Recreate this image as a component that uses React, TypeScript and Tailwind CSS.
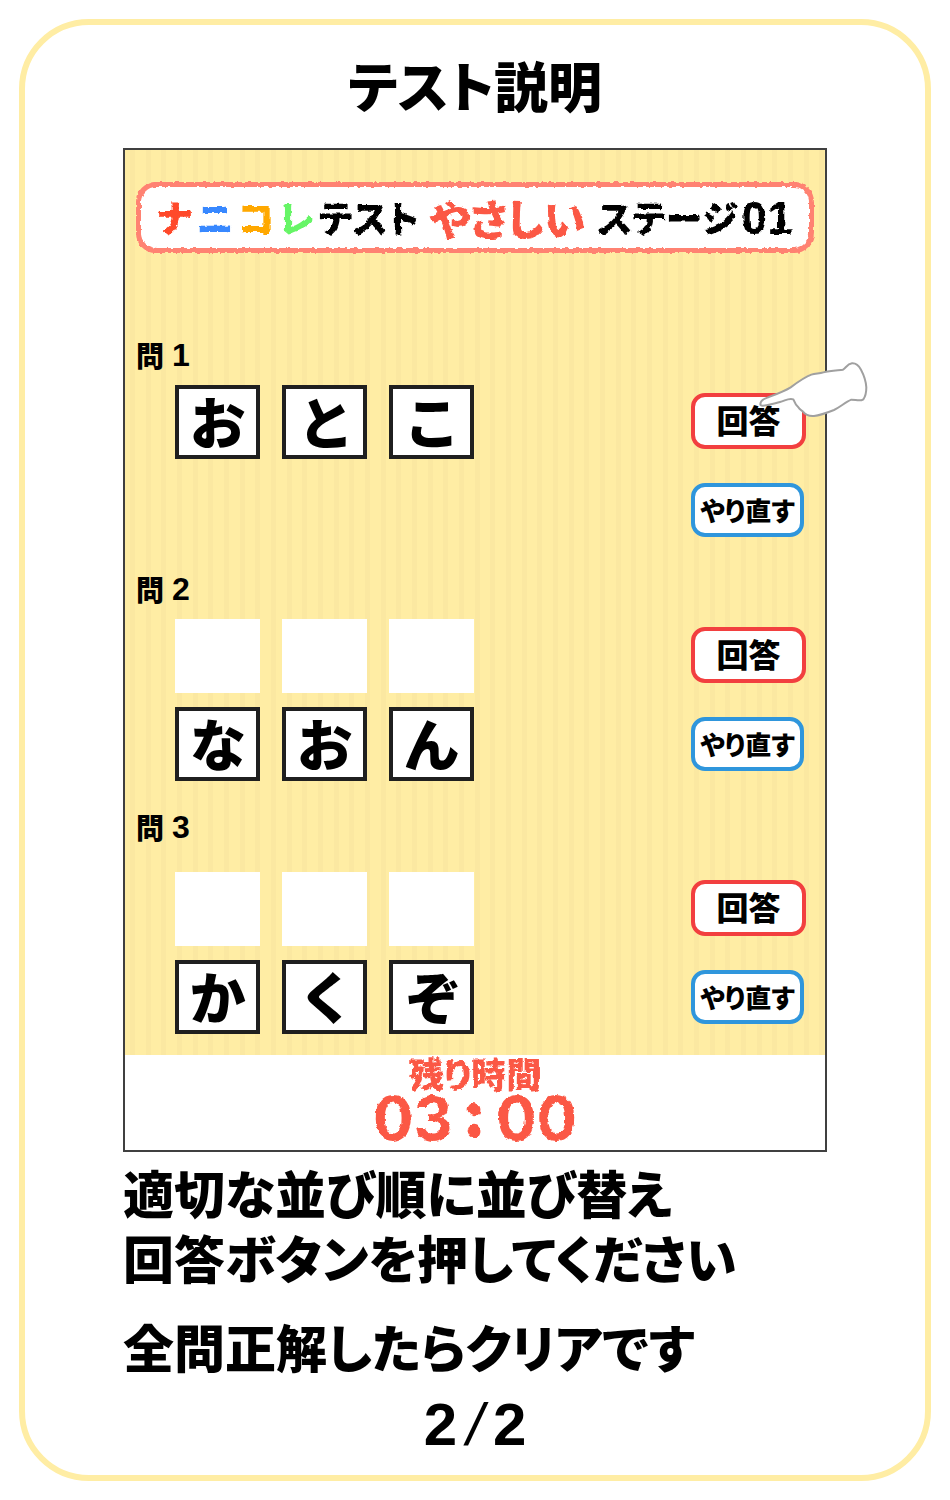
import React from "react";

const ink = "font-['Noto_Sans_CJK_JP',sans-serif] font-black [font-feature-settings:'palt']";

function RoughFilters() {
  return (
    <svg width="0" height="0" className="absolute" aria-hidden="true">
      <filter id="rough" x="-2%" y="-10%" width="104%" height="120%">
        <feTurbulence type="fractalNoise" baseFrequency="0.18" numOctaves="3" seed="4" result="n" />
        <feDisplacementMap in="SourceGraphic" in2="n" scale="4" xChannelSelector="R" yChannelSelector="G" />
      </filter>
    </svg>
  );
}

function Hand() {
  return (
    <svg
      viewBox="0 0 375 216"
      className="pointer-events-none absolute -top-10 left-[59px] h-[72px] w-[125px]"
      aria-hidden="true"
    >
      <path
        d="M31 154 C31 145 40 138 52 134 C78 124 105 114 122 103 C145 86 165 72 184 65 C197 61 208 62 220 58 C240 52 262 52 279 50 C288 44 292 33 306 31 C320 30 327 39 333 50 C342 67 348 86 349 103 C349 118 346 131 340 139 C330 146 318 140 304 140 C285 148 270 163 252 171 C232 179 212 187 192 189 C178 190 165 184 159 176 C155 170 150 172 145 163 C136 155 134 149 130 139 C115 134 105 144 90 147 C70 152 52 158 38 158 C33 158 31 157 31 154 Z"
        fill="#fff"
        stroke="#a0a0a0"
        strokeWidth="6"
        strokeLinejoin="round"
      />
    </svg>
  );
}

function Tile({ char }: { char: string }) {
  return (
    <button
      type="button"
      className="flex h-[74px] w-[85px] items-center justify-center border-4 border-[#1f1f1f] bg-white pb-1 text-[56px] leading-none"
    >
      {char}
    </button>
  );
}

type QuestionProps = { n: number; slots: boolean; tiles: string[]; hand?: boolean; roomy?: boolean };

function Question({ n, slots, tiles, hand, roomy }: QuestionProps) {
  return (
    <section>
      <h2 className="flex h-9 items-center gap-2 text-[28px] leading-9">
        <span>問</span>
        <span className="font-['Liberation_Sans',sans-serif] text-[32px] font-bold">{n}</span>
      </h2>
      <div className={`flex justify-between pr-2 pl-[39px] ${roomy ? "mt-[27px]" : "mt-3"}`}>
        <div className="flex flex-col gap-[14px]">
          {slots && (
            <div className="flex gap-[22px]">
              {tiles.map((t) => (
                <div key={t} className="h-[74px] w-[85px] bg-white" />
              ))}
            </div>
          )}
          <div className="flex gap-[22px]">
            {tiles.map((t) => (
              <Tile key={t} char={t} />
            ))}
          </div>
        </div>
        <div className="flex flex-col items-start gap-[34px] pt-2">
          <div className="relative">
            <button
              type="button"
              className="flex h-14 w-[115px] items-center justify-center rounded-[14px] border-4 border-[#f23f3f] bg-white pb-1 text-[32px] leading-none"
            >
              回答
            </button>
            {hand && <Hand />}
          </div>
          <button
            type="button"
            className="flex h-[54px] w-[113px] items-center justify-center rounded-[14px] border-4 border-[#2f96dc] bg-white text-[26px] leading-none whitespace-nowrap"
          >
            やり直す
          </button>
        </div>
      </div>
    </section>
  );
}

export default function App() {
  return (
    <main className="bg-white p-[19px] text-black">
      <RoughFilters />
      <div className={`rounded-[70px] border-[6px] border-[#ffeda4] pt-7 pb-[14px] ${ink}`}>
        <h1 className="text-center text-[54px] leading-[64px]">テスト説明</h1>
        <div className="mx-auto mt-[31px] w-[704px] max-w-full">
          <div className="border-2 border-[#404040]">
            <div className="bg-[#ffeda4] bg-[repeating-linear-gradient(90deg,transparent_0px,transparent_5px,#fbe8a1_5px,#fbe8a1_10px,transparent_10px,transparent_21px,#fbe8a1_21px,#fbe8a1_26px,transparent_26px,transparent_36px,#fbe8a1_36px,#fbe8a1_41px,transparent_41px,transparent_47px)] px-[11px] pt-8 pb-[21px]">
              <div className="rounded-[20px] border-[5px] border-[#ff8272] bg-white [filter:url(#rough)]">
                <p className="flex h-[61px] items-center justify-center gap-3 text-[37px] leading-none whitespace-nowrap">
                  <span className="flex items-center gap-[5px]">
                    <span className="text-[#ff4a2a]">ナ</span>
                    <span className="text-[#3888ff]">ニ</span>
                    <span className="text-[#ffa800]">コ</span>
                    <span className="text-[#66f566]">レ</span>
                    <span>テスト</span>
                  </span>
                  <span className="text-[42px] text-[#fb5845]">やさしい</span>
                  <span className="flex items-center gap-1">
                    ステージ
                    <span className="font-['Liberation_Sans',sans-serif] text-[46px] font-bold">01</span>
                  </span>
                </p>
              </div>
              <div className="flex flex-col pt-[84px]">
                <Question n={1} slots={false} tiles={["お", "と", "こ"]} hand />
                <div className="mt-[34px]">
                  <Question n={2} slots tiles={["な", "お", "ん"]} />
                </div>
                <div className="mt-7">
                  <Question n={3} slots tiles={["か", "く", "ぞ"]} roomy />
                </div>
              </div>
            </div>
            <div className="bg-white pb-1 text-center text-[#fb5845]">
              <div className="[filter:url(#rough)]">
                <p className="text-[35px] leading-9">残り時間</p>
                <p className="flex h-[55px] items-center justify-center font-['Inter',sans-serif] text-[60px] leading-[55px] font-bold">
                  <span>03</span>
                  <span className="w-11 pb-4 font-['Noto_Sans_CJK_JP',sans-serif] font-black">:</span>
                  <span>00</span>
                </p>
              </div>
            </div>
          </div>
          <div className="text-[51px] leading-[65px]">
            <p className="mt-2">
              適切な並び順に並び替え
              <br />
              回答ボタンを押してください
            </p>
            <p className="mt-6">全問正解したらクリアです</p>
          </div>
        </div>
        <p className="mt-[10px] flex items-center justify-center gap-1 font-['Liberation_Sans',sans-serif] text-[60px] leading-[72px] font-bold">
          <span>2</span>
          <span className="w-7 text-center font-normal italic">/</span>
          <span>2</span>
        </p>
      </div>
    </main>
  );
}
